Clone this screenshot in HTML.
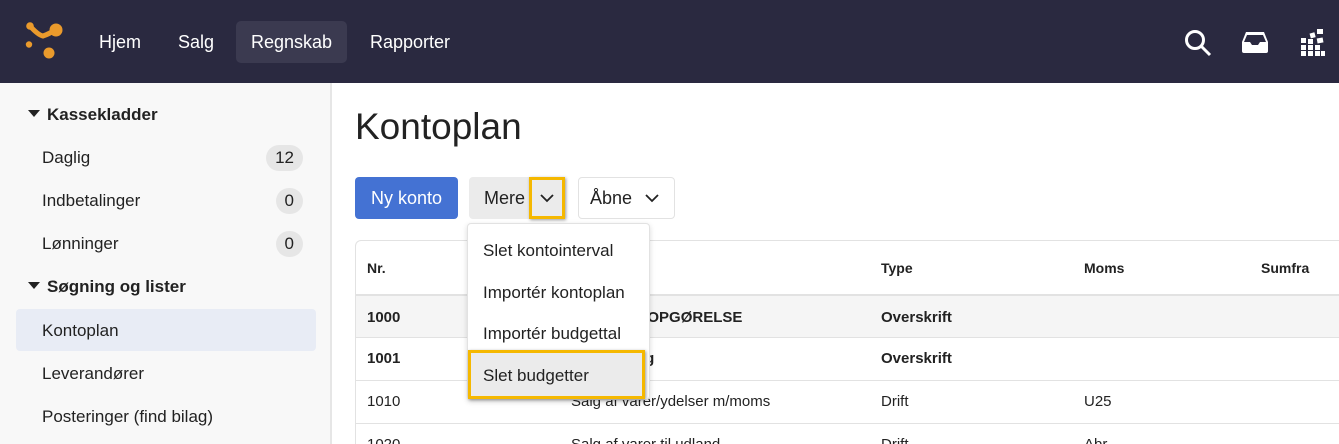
<!DOCTYPE html>
<html style="overflow:hidden"><head><meta charset="utf-8"><style>
*{box-sizing:border-box;margin:0;padding:0}
html,body{width:1339px;height:444px;overflow:hidden}
body{font-family:"Liberation Sans",Arial,sans-serif;background:#fff;color:#222;position:relative}
.top{position:absolute;left:0;top:0;width:1339px;height:83px;background:#2a2940}
.nav{position:absolute;top:21px;height:42px;line-height:42px;color:#fff;font-size:18px;padding:0 15px;border-radius:5px}
.side{position:absolute;left:0;top:83px;width:332px;height:361px;background:#f8f8f8;border-right:2px solid #e6e6e6}
.sh{position:absolute;left:28px;font-weight:bold;font-size:17px}
.si{position:absolute;left:42px;font-size:17px}
.badge{position:absolute;right:27px;height:26px;line-height:26px;background:#e6e6e6;border-radius:13px;font-size:17px;padding:0 9px}
.tri{display:inline-block;width:0;height:0;border-left:6px solid transparent;border-right:6px solid transparent;border-top:7px solid #222;margin-right:7px;vertical-align:3px}
.abs{position:absolute}
.tb{position:absolute;left:355px;top:240px;width:1000px;height:204px;overflow:hidden;border:1px solid #e2e2e2;border-bottom:none;border-radius:6px 0 0 0}
.row{position:absolute;left:0;width:1000px;border-top:1px solid #e2e2e2;font-size:15px}
.row span{position:absolute}
</style></head><body>
<div class="top">
<svg class="abs" style="left:24px;top:20px" width="40" height="42" viewBox="0 0 40 42"><g fill="#ea9a2c"><circle cx="6" cy="6" r="3.8"/><circle cx="32" cy="10" r="6.5"/><circle cx="5" cy="24.5" r="3.2"/><circle cx="25" cy="33" r="5.5"/></g><path d="M6 6 Q14 15 19 16 Q25 14 31 10" fill="none" stroke="#ea9a2c" stroke-width="5" stroke-linecap="round"/></svg>
<div class="nav" style="left:84px">Hjem</div>
<div class="nav" style="left:163px">Salg</div>
<div class="nav" style="left:236px;background:#3b3a50">Regnskab</div>
<div class="nav" style="left:355px">Rapporter</div>
<svg class="abs" style="left:1183px;top:28px" width="30" height="30" viewBox="0 0 30 30" fill="none" stroke="#fff" stroke-width="3"><circle cx="12" cy="12" r="8.5"/><path d="M18 18l9 9"/></svg>
<svg class="abs" style="left:1240px;top:30px" width="30" height="24" viewBox="0 0 30 24"><path d="M6 2h18l4 10v9a2 2 0 0 1-2 2H4a2 2 0 0 1-2-2v-9z" fill="#fff"/><path d="M7 5h16l3 7h-6l-2 3h-6l-2-3H4z" fill="#2a2940"/></svg>
<svg class="abs" style="left:1300px;top:28px" width="26" height="28" viewBox="0 0 26 28" fill="#fff"><rect x="17" y="1" width="6" height="5"/><rect x="10" y="5" width="5" height="5" transform="rotate(-15 12 7)"/><rect x="17" y="10" width="6" height="5" transform="rotate(-10 20 12)"/><rect x="1" y="10" width="5" height="5"/><rect x="8" y="11" width="5" height="5"/><rect x="1" y="17" width="5" height="5"/><rect x="8" y="17" width="5" height="5"/><rect x="15" y="17" width="5" height="5"/><rect x="1" y="23" width="5" height="5"/><rect x="8" y="23" width="5" height="5"/><rect x="15" y="23" width="5" height="5"/><rect x="21" y="23" width="4" height="5"/></svg>
</div>
<div class="side">
<div class="sh" style="top:22px"><span class="tri"></span>Kassekladder</div>
<div class="si" style="top:65px">Daglig</div><div class="badge" style="top:62px">12</div>
<div class="si" style="top:108px">Indbetalinger</div><div class="badge" style="top:105px">0</div>
<div class="si" style="top:151px">Lønninger</div><div class="badge" style="top:148px">0</div>
<div class="sh" style="top:194px"><span class="tri"></span>Søgning og lister</div>
<div class="abs" style="left:16px;top:226px;width:300px;height:42px;background:#e8ecf5;border-radius:4px"></div>
<div class="si" style="top:238px">Kontoplan</div>
<div class="si" style="top:281px">Leverandører</div>
<div class="si" style="top:324px">Posteringer (find bilag)</div>
</div>
<div class="abs" style="left:355px;top:106px;font-size:37px;color:#222">Kontoplan</div>
<div class="abs" style="left:355px;top:177px;width:103px;height:42px;background:#4472d3;border-radius:4px;color:#fff;font-size:18px;line-height:42px;text-align:center">Ny konto</div>
<div class="abs" style="left:469px;top:177px;width:96px;height:42px;background:#ebebeb;border-radius:4px;font-size:18px;line-height:42px;padding-left:15px">Mere</div>
<div class="abs" style="left:529px;top:177px;width:36px;height:42px;border:3px solid #f5b800;box-shadow:1px 1px 3px rgba(0,0,0,.4)"></div>
<svg class="abs" style="left:539px;top:193px" width="16" height="10" viewBox="0 0 16 10" fill="none" stroke="#222" stroke-width="1.8"><path d="M2 2l6 6 6-6"/></svg>
<div class="abs" style="left:578px;top:177px;width:97px;height:42px;border:1px solid #e2e2e2;border-radius:4px;font-size:18px;line-height:40px;padding-left:11px">Åbne</div>
<svg class="abs" style="left:644px;top:193px" width="16" height="10" viewBox="0 0 16 10" fill="none" stroke="#222" stroke-width="1.8"><path d="M2 2l6 6 6-6"/></svg>
<div class="tb">
<div class="row" style="top:0;height:55px;border-top:none;font-weight:bold;font-size:14px"><span style="left:11px;top:19px">Nr.</span><span style="left:525px;top:19px">Type</span><span style="left:728px;top:19px">Moms</span><span style="left:905px;top:19px">Sumfra</span></div>
<div class="row" style="top:53px;height:43px;background:#f5f5f5;font-weight:bold;border-top:2px solid #e2e2e2"><span style="left:11px;top:13px">1000</span><span style="left:215px;top:13px">RESULTATOPGØRELSE</span><span style="left:525px;top:13px">Overskrift</span></div>
<div class="row" style="top:96px;height:43px;font-weight:bold"><span style="left:11px;top:12px">1001</span><span style="left:215px;top:12px">Omsætning</span><span style="left:525px;top:12px">Overskrift</span></div>
<div class="row" style="top:139px;height:43px"><span style="left:11px;top:12px">1010</span><span style="left:215px;top:12px">Salg af varer/ydelser m/moms</span><span style="left:525px;top:12px">Drift</span><span style="left:728px;top:12px">U25</span></div>
<div class="row" style="top:182px;height:43px"><span style="left:11px;top:12px">1020</span><span style="left:215px;top:12px">Salg af varer til udland</span><span style="left:525px;top:12px">Drift</span><span style="left:728px;top:12px">Abr</span></div>
</div>
<div class="abs" style="left:467px;top:223px;width:183px;height:177px;background:#fff;border:1px solid #e2e2e2;border-radius:4px;box-shadow:0 2px 6px rgba(0,0,0,.15);font-size:17px">
<div class="abs" style="left:15px;top:17px">Slet kontointerval</div>
<div class="abs" style="left:15px;top:59px">Importér kontoplan</div>
<div class="abs" style="left:15px;top:100px">Importér budgettal</div>
<div class="abs" style="left:0;top:126px;width:177px;height:49px;background:#ebebeb;border:3px solid #f5b800;box-shadow:1px 1px 3px rgba(0,0,0,.4)"></div>
<div class="abs" style="left:15px;top:142px">Slet budgetter</div>
</div>
</body></html>
